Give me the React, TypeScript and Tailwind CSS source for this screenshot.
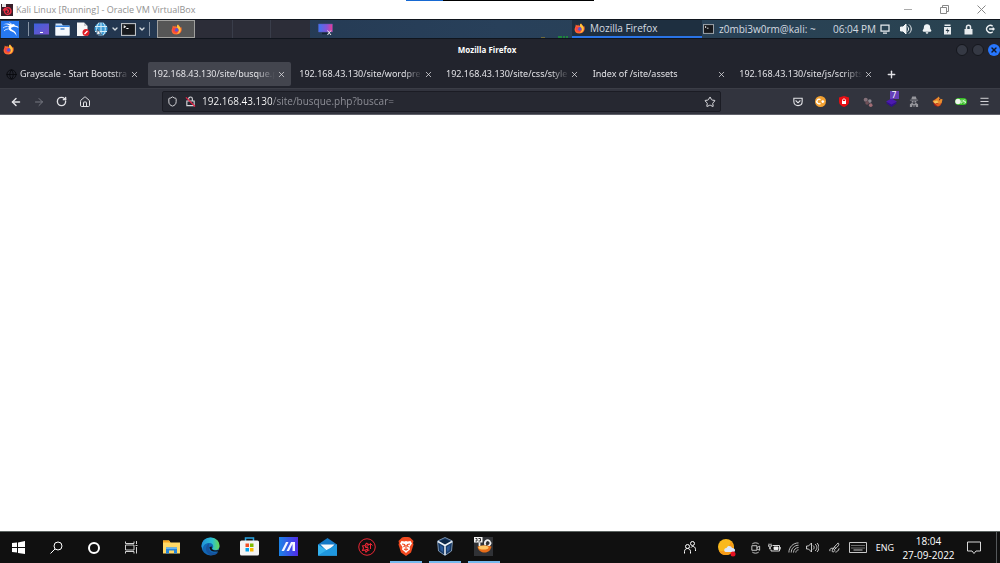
import type { ReactNode } from "react";
import { ArrowLeft, ArrowRight, Bell, ChevronDown, Globe, House, Menu, Plus, RotateCw, Search, Shield, Star, X } from "lucide-react";

const tabs = [
  { title: "Grayscale - Start Bootstra", icon: true },
  { title: "192.168.43.130/site/busque.p", active: true },
  { title: "192.168.43.130/site/wordpres" },
  { title: "192.168.43.130/site/css/style" },
  { title: "Index of /site/assets" },
  { title: "192.168.43.130/site/js/scripts" },
];

function FirefoxLogo({ className }: { className: string }) {
  return (
    <svg viewBox="0 0 24 24" className={className}>
      <path d="M3 8 4 3l3 3 2-3 2 4 5-6c2 3 3 5 5 7l1-2c3 6 1 17-10 17C2 23-1 15 3 8Z" fill="#ff6a2e" />
      <path d="M14 1c3 3 8 6 7 13-1 4-4 7-8 7 5-3 6-8 2-11-2-2-3-5-1-9Z" fill="#ffc73a" />
      <circle cx="12" cy="13" r="4.5" fill="#5c55cf" />
      <path d="M3 9c3-2 6-1 8 2l-4 2c1 4 6 5 9 2-1 5-9 7-12 1Z" fill="#f8443f" />
    </svg>
  );
}

function Terminal({ className }: { className: string }) {
  return (
    <svg viewBox="0 0 28 24" className={className}>
      <rect x="1" y="1" width="26" height="22" fill="#17191d" stroke="#bfc3c8" strokeWidth="2" />
      <path d="m5 5 3 2-3 2M10 10h4" fill="none" stroke="#fff" strokeWidth="2" />
    </svg>
  );
}

function VirtualMachineIcon() {
  return (
    <svg viewBox="0 0 24 24" className="size-3">
      <rect width="24" height="24" fill="#38202a" />
      <path d="M2 0h8v6H2z" fill="#e8e8e8" />
      <path d="M4 13c3-6 14-9 16 0 1 8-9 10-12 5s1-8 5-6 1 6-1 4" fill="none" stroke="#ee2d43" strokeWidth="2.8" />
    </svg>
  );
}

function PanelButton({ label, className, children }: { label: string; className: string; children: ReactNode }) {
  return (
    <button aria-label={label} className={`flex h-full shrink-0 items-center justify-center ${className}`}>
      {children}
    </button>
  );
}

function KaliPanel() {
  return (
    <div className="flex h-5 items-center border-y border-[#10151d] bg-linear-to-r from-[#22344d] via-[#28405a] to-[#2a4350] font-['Open_Sans',sans-serif] text-[10px] text-[#d5dbe0]">
      <PanelButton label="Applications" className="w-5">
        <svg viewBox="0 0 36 34" className="h-[17px] w-[18px]">
          <rect width="36" height="34" fill="#2678f0" />
          <path d="M3 7c7-3 13-3 18 0l5-1 2 3 6 2 1 3c-4-2-8-3-11-2-5 1-5 4-1 6 5 2 8 6 8 12-3-7-7-8-12-10-5-3-5-7-2-11-4-3-9-3-14-2Z" fill="#fff" />
          <path d="M4 14c4-3 8-4 12-3M6 20c3-3 5-4 9-4M17 3l6 5" fill="none" stroke="#fff" strokeWidth="1.5" />
        </svg>
      </PanelButton>
      <span className="ml-2 h-3.5 w-px bg-[#8693a4]" />
      <PanelButton label="Show desktop" className="ml-1 w-4">
        <svg viewBox="0 0 30 24" className="h-3 w-[15px]">
          <defs>
            <linearGradient id="desk" x2="1" y2="1"><stop stopColor="#3c62df" /><stop offset="1" stopColor="#7650c8" /></linearGradient>
          </defs>
          <path d="M0 1h30v22H0z" fill="url(#desk)" />
          <path d="M12 19h6" stroke="#fff" strokeWidth="2" />
        </svg>
      </PanelButton>
      <PanelButton label="Files" className="ml-[5px] w-4">
        <svg viewBox="0 0 30 26" className="h-[13px] w-[15px]">
          <path d="M1 1h12l3 4h13v20H1z" fill="#cfe3fa" />
          <path d="M1 5h28v5H1z" fill="#3584e4" />
          <path d="M1 8h28v17H1z" fill="#f4f8fd" />
          <path d="M11 12h8" stroke="#4e87c8" strokeWidth="3" />
        </svg>
      </PanelButton>
      <PanelButton label="Text editor" className="ml-[5px] w-4">
        <svg viewBox="0 0 28 30" className="h-[15px] w-3.5">
          <path d="M2 1h14l7 7v20H2z" fill="#f7f7f7" />
          <path d="m16 1 7 7h-7z" fill="#c4c7cc" />
          <circle cx="20" cy="21" r="7" fill="#e01b24" />
          <path d="m17 24 6-6" stroke="#fff" strokeWidth="2.4" />
        </svg>
      </PanelButton>
      <PanelButton label="Web browser" className="ml-[2px] w-4">
        <svg viewBox="0 0 28 28" className="size-3.5" fill="none">
          <circle cx="14" cy="14" r="13" fill="#3d9bd5" />
          <path d="M14 1v26M2 9h24M2 19h24M10 1c-6 8-6 18 0 26M18 1c6 8 6 18 0 26" stroke="#d5edf8" strokeWidth="2" />
          <path d="m5 26 2-11 8 10-4-1Z" fill="#fff" stroke="#243b57" strokeWidth="1.5" />
        </svg>
      </PanelButton>
      <PanelButton label="More browsers" className="w-[11px]"><ChevronDown size={8} strokeWidth={4} /></PanelButton>
      <PanelButton label="Terminal" className="w-4"><Terminal className="h-[13px] w-[15px]" /></PanelButton>
      <PanelButton label="More terminals" className="w-3"><ChevronDown size={8} strokeWidth={4} /></PanelButton>
      <span className="ml-[1px] h-3.5 w-px bg-[#8693a4]" />
      <button aria-label="Workspace 1" className="ml-[7px] flex h-full w-[38px] items-center justify-center border border-[#a0a09e] bg-[#565656]">
        <FirefoxLogo className="size-[11px]" />
      </button>
      <button aria-label="Workspace 2" className="h-full w-[38px] border-r border-[#393d4a] bg-[#2c2d38]" />
      <button aria-label="Workspace 3" className="h-full w-[38px] border-r border-[#393d4a] bg-[#2c2d38]" />
      <button aria-label="Workspace 4" className="h-full w-[39px] bg-[#2c2d38]" />
      <PanelButton label="Display" className="ml-[7px] w-4">
        <svg viewBox="0 0 30 26" className="h-[13px] w-[15px]">
          <defs>
            <linearGradient id="screen" x2="1"><stop stopColor="#3a77f2" /><stop offset=".6" stopColor="#8754d6" /><stop offset="1" stopColor="#ec3b91" /></linearGradient>
          </defs>
          <path d="M1 2h28v16H1z" fill="url(#screen)" stroke="#5b59b8" strokeWidth="1" />
          <path d="M8 21h10" stroke="#152334" strokeWidth="3" />
          <path d="m19 15 7 9m0-9-7 9" stroke="#e8e8e8" strokeWidth="2" />
        </svg>
      </PanelButton>
      <div className="ml-auto flex h-full items-end gap-[13px] pr-1">
        <span className="h-px w-1 bg-[#6f6b3e]" />
        <svg viewBox="0 0 10 2" className="h-0.5 w-2.5"><path d="M0 1h4m1 0h2m1 0h2" stroke="#1c9a37" strokeWidth="1.4" /></svg>
      </div>
      <button className="flex h-full w-[130px] items-center gap-[5px] border-b-2 border-[#2a74e6] bg-[#1e2f40] pl-[2px]">
        <FirefoxLogo className="size-[11px]" />
        Mozilla Firefox
      </button>
      <button className="flex h-full w-[131px] items-center gap-[5px] pl-px">
        <Terminal className="h-2.5 w-[11px]" />
        z0mbi3w0rm@kali: ~
      </button>
      <time className="w-[41px] text-right whitespace-nowrap">06:04 PM</time>
      <PanelButton label="Screen" className="w-[21px]">
        <svg viewBox="0 0 20 20" className="size-2.5" fill="none" stroke="#e8ecef" strokeWidth="2.5"><path d="M2 2h16v12H2zM6 18h8" /></svg>
      </PanelButton>
      <PanelButton label="Volume" className="w-[21px]">
        <svg viewBox="0 0 24 24" className="size-3" fill="#f0f3f5" stroke="#f0f3f5" strokeWidth="2">
          <path d="M1 8h5l6-6v20l-6-6H1z" />
          <path d="M15 7c3 3 3 7 0 10M18 3c6 5 6 13 0 18" fill="none" />
        </svg>
      </PanelButton>
      <PanelButton label="Notifications" className="w-[21px]"><Bell size={10} fill="#f0f3f5" color="#f0f3f5" strokeWidth={3} /></PanelButton>
      <PanelButton label="Power" className="w-[21px]">
        <svg viewBox="0 0 18 22" className="h-[11px] w-[9px]">
          <path d="M3 1h12v3H3zM2 6h14v15H2z" fill="#e8ecef" />
          <path d="m10 8-5 6h4l-1 5 5-7H9Z" fill="#253744" />
        </svg>
      </PanelButton>
      <PanelButton label="Lock" className="w-[21px]">
        <svg viewBox="0 0 18 22" className="h-[11px] w-[9px]"><path d="M1 10h16v11H1z" fill="#e8ecef" /><path d="M5 11V6c0-5 8-5 8 0v5" fill="none" stroke="#e8ecef" strokeWidth="3" /></svg>
      </PanelButton>
      <PanelButton label="Log out" className="w-[21px]">
        <svg viewBox="0 0 22 22" className="size-2.5" fill="none" stroke="#f0f3f5" strokeWidth="3"><path d="M17 5a8 8 0 1 0 0 12M9 11h11M17 8l3 3-3 3" /></svg>
      </PanelButton>
    </div>
  );
}

function Extensions() {
  return (
    <div className="mr-1 flex h-full w-[210px] items-center justify-between">
      <PanelButton label="Pocket" className="w-[23px]">
        <svg viewBox="0 0 24 24" className="size-2.5" fill="none" stroke="#e4e4e8" strokeWidth="2.6" strokeLinecap="round"><path d="M2 3h20v8c0 13-20 13-20 0zM7 9l5 5 5-5" /></svg>
      </PanelButton>
      <PanelButton label="Cookie editor" className="w-[23px]">
        <svg viewBox="0 0 24 24" className="size-[11px]"><circle cx="12" cy="12" r="12" fill="#f3a131" /><path d="M12 8a5 5 0 1 0 0 8M14 12h6m-3-3v6" fill="none" stroke="#fff" strokeWidth="3" /></svg>
      </PanelButton>
      <PanelButton label="Ad blocker" className="w-[23px]">
        <svg viewBox="0 0 20 22" className="h-[11px] w-2.5"><path d="m10 0 10 3v9c0 5-5 8-10 10C5 20 0 17 0 12V3z" fill="#e90d12" /><path d="M6 10h8v6H6z" fill="#fff" /><path d="M7 10V8c0-3 6-3 6 0v2" fill="none" stroke="#fff" strokeWidth="1.6" /></svg>
      </PanelButton>
      <PanelButton label="Web analyzer" className="w-[23px]">
        <svg viewBox="0 0 22 22" className="size-2.5" fill="#86727a"><circle cx="6" cy="6" r="4.5" /><circle cx="15" cy="9" r="4" fill="#8c8790" /><circle cx="9" cy="13" r="4" fill="#705159" /><circle cx="17" cy="18" r="4" fill="#a06c74" /></svg>
      </PanelButton>
      <button aria-label="Wappalyzer" className="relative flex h-full w-[23px] items-center justify-center">
        <svg viewBox="0 0 22 20" className="h-2.5 w-[11px]"><path d="m11 6 11 6-11 8L0 12z" fill="#32108c" /><path d="m11 3 11 6-11 6L0 9z" fill="#4c1aae" /></svg>
        <span className="absolute top-0.5 left-2.5 h-2 w-[9px] bg-[#6540b8] text-center text-[8px] leading-[8px] text-white">7</span>
      </button>
      <PanelButton label="Private identity" className="w-[23px]">
        <svg viewBox="0 0 22 24" className="h-[11px] w-2.5" fill="#96969c"><path d="M7 1h8l2 6H5zM2 8h18v2H2zM6 11h4v3H6zm6 0h4v3h-4zM2 24v-6l5-3 4 3 4-3 5 3v6h-5v-4h-3v4h-2v-4H7v4z" /></svg>
      </PanelButton>
      <PanelButton label="Proxy switcher" className="w-[23px]">
        <svg viewBox="0 0 24 24" className="size-[11px]"><circle cx="12" cy="14" r="9" fill="#a51c1c" /><path d="m1 11 7-4 7-6 2 5 6 1-2 9-5 2-5-3-6 1z" fill="#e98d2e" /><path d="m3 12 8-2 3 4-7 3z" fill="#f4c45c" /><path d="m7 18 8-2 5 3-7 4z" fill="#df6120" /><path d="m16 6 3 2-4 2z" fill="#5b1f22" /></svg>
      </PanelButton>
      <PanelButton label="JavaScript toggle" className="w-[23px]">
        <svg viewBox="0 0 24 14" className="h-[7px] w-3"><rect width="24" height="14" rx="7" fill="#36bd23" /><circle cx="6" cy="7" r="5.5" fill="#f1f5f0" /><path d="M14 3v7h-3m10-6h-4v3h4v3h-4" fill="none" stroke="#e8ffe5" strokeWidth="1.6" /></svg>
      </PanelButton>
      <PanelButton label="Menu" className="w-[23px]"><Menu size={11} strokeWidth={2} /></PanelButton>
    </div>
  );
}

function Firefox() {
  return (
    <section className="flex flex-1 flex-col text-[#e2e2e6]">
      <div className="flex h-[21px] items-center bg-[#22242d] pl-[3px]">
        <FirefoxLogo className="size-[11px]" />
        <h1 className="flex-1 pl-1 text-center font-['Open_Sans',sans-serif] text-[8px] font-bold text-white">Mozilla Firefox</h1>
        <div className="flex gap-1">
          <button aria-label="Minimize" className="size-3 rounded-full border border-[#15171d] bg-[#353944]" />
          <button aria-label="Maximize" className="size-3 rounded-full border border-[#15171d] bg-[#353944]" />
          <button aria-label="Close" className="flex size-3 items-center justify-center rounded-full bg-[#2777ff] text-[#10182b]"><X size={8} strokeWidth={4} /></button>
        </div>
      </div>
      <div className="flex items-center bg-[#22242d] py-[2px] text-[9px]">
        <div role="tablist" className="grid w-[88%] grid-cols-6 gap-[3px] pr-[2px] pl-px">
          {tabs.map((tab) => (
            <div key={tab.title} className={`flex h-6 min-w-0 items-center rounded-xs pr-1 pl-[5px] ${tab.active ? "bg-[#43454e]" : ""}`}>
              {tab.icon && <Globe size={11} className="mr-[3px] shrink-0 text-[#090a0e]" />}
              <button role="tab" aria-selected={!!tab.active} className="min-w-0 flex-1 mask-r-from-85% text-left whitespace-nowrap">
                {tab.title}
              </button>
              <button aria-label="Close tab" className="flex w-3 shrink-0 justify-center"><X size={9} strokeWidth={2} /></button>
            </div>
          ))}
        </div>
        <button aria-label="New tab" className="ml-1.5"><Plus size={11} strokeWidth={3} /></button>
      </div>
      <div className="flex h-[27px] items-center border-t border-b border-t-[#3b3d46] border-b-[#60616a] bg-[#32343e] pl-1">
        <PanelButton label="Back" className="w-[23px]"><ArrowLeft size={12} strokeWidth={3} /></PanelButton>
        <PanelButton label="Forward" className="w-[23px] text-[#777982]"><ArrowRight size={12} strokeWidth={2} /></PanelButton>
        <PanelButton label="Reload" className="w-[23px]">
          <RotateCw size={11} strokeWidth={3} />
        </PanelButton>
        <PanelButton label="Home" className="w-[23px]">
          <House size={12} strokeWidth={2} />
        </PanelButton>
        <div className="mr-[65px] ml-[66px] flex h-[21px] flex-1 items-center rounded-xs border border-[#1b1c24] bg-[#262831] px-1">
          <Shield size={11} strokeWidth={2} />
          <svg viewBox="0 0 24 24" className="ml-[7px] mr-1.5 size-[11px]" fill="none" stroke="#d9d9dd" strokeWidth="2.4">
            <path d="M4 11h16v10H4zM8 11V6c0-5 8-5 8 0v5" />
            <path d="m2 3 20 20" stroke="#e92045" strokeWidth="2.6" />
          </svg>
          <input
            aria-label="Address"
            defaultValue="192.168.43.130/site/busque.php?buscar="
            className="min-w-0 flex-1 bg-linear-to-r from-white from-[70px] to-[#92939b] to-[70px] bg-clip-text font-['Open_Sans',sans-serif] text-[10px] text-transparent outline-none"
          />
          <button aria-label="Bookmark"><Star size={12} strokeWidth={2} /></button>
        </div>
        <Extensions />
      </div>
      <main className="flex-1 bg-white" />
    </section>
  );
}

function AppButton({ label, running, children }: { label: string; running?: boolean; children: ReactNode }) {
  return (
    <button aria-label={label} className="flex h-full w-[39px] flex-col items-center">
      <span className="flex flex-1 items-center">{children}</span>
      <span className={`h-0.5 w-8 ${running ? "bg-[#76b9ed]" : ""}`} />
    </button>
  );
}

function Taskbar() {
  return (
    <footer className="flex h-8 items-center border-t border-[#5c6461] bg-[#101010] font-['Open_Sans',sans-serif] text-white">
      <PanelButton label="Start" className="w-[37px]">
        <svg viewBox="0 0 26 26" className="size-[13px]" fill="#fff"><path d="m0 4 10-1v9H0zm12-1 14-3v12H12zM0 14h10v9L0 22zm12 0h14v12l-14-2z" /></svg>
      </PanelButton>
      <PanelButton label="Search" className="w-[38px]">
        <svg viewBox="0 0 26 26" className="size-[13px]" fill="none" stroke="#fff" strokeWidth="2"><circle cx="16" cy="10" r="8" /><path d="M10 16 1 25" /></svg>
      </PanelButton>
      <PanelButton label="Cortana" className="w-[37px]"><span className="size-3 rounded-full border-2 border-white" /></PanelButton>
      <PanelButton label="Task view" className="w-[38px]">
        <svg viewBox="0 0 26 26" className="size-[13px]" fill="none" stroke="#e8e8e8" strokeWidth="1.8"><path d="M1 1v4h17V1M1 8h17v10H1zM1 25v-4h17v4M23 0v6M23 12v13M21 9h4" /></svg>
      </PanelButton>
      <div className="ml-[2px] flex h-full">
        <AppButton label="File Explorer">
          <svg viewBox="0 0 34 28" className="h-3.5 w-[17px]"><path d="M0 1h12l3 4h19v22H0z" fill="#ffd866" /><path d="M0 1h12l3 4H0z" fill="#f5a623" /><path d="M6 27V15h22v12h-6v-6H12v6z" fill="#2585dc" /><path d="M6 15h22v3H6z" fill="#61b4f5" /></svg>
        </AppButton>
        <AppButton label="Microsoft Edge">
          <svg viewBox="0 0 38 38" className="size-[19px]">
            <defs>
              <linearGradient id="edge" x2="1"><stop stopColor="#208fda" /><stop offset=".6" stopColor="#2cc1cf" /><stop offset="1" stopColor="#6ad94e" /></linearGradient>
            </defs>
            <circle cx="19" cy="19" r="18" fill="#1167b5" />
            <path d="M1 18C2-5 37-4 37 18c0 9-10 10-15 6 5-5 2-12-5-12C8 12 4 17 3 25Z" fill="url(#edge)" />
            <path d="M16 13c-8 5-9 17 2 23 6 2 14-1 17-6-11 5-20-1-19-8Z" fill="#16539d" />
            <path d="M17 20c0 8 9 11 18 8l1-2c-7 2-17 1-14-7Z" fill="#101010" />
          </svg>
        </AppButton>
        <AppButton label="Microsoft Store">
          <svg viewBox="0 0 38 38" className="size-[19px]"><path d="M11 9V2h16v7" fill="none" stroke="#29a3df" strokeWidth="3" /><rect y="7" width="38" height="30" rx="3" fill="#f3f3f3" /><path d="M11 13h7v7h-7z" fill="#f04e23" /><path d="M20 13h7v7h-7z" fill="#7eba00" /><path d="M11 22h7v7h-7z" fill="#00a2ed" /><path d="M20 22h7v7h-7z" fill="#fdb900" /></svg>
        </AppButton>
        <AppButton label="MyASUS">
          <svg viewBox="0 0 38 38" className="size-[19px]"><defs><linearGradient id="asus" x2="1"><stop stopColor="#1a83e6" /><stop offset="1" stopColor="#512ce8" /></linearGradient></defs><path d="M0 0h38v38H0z" fill="url(#asus)" /><path d="M5 28 14 10h5l-9 18zm10 0 9-18h8v18h-5V14l-7 14z" fill="#f1f4ff" /></svg>
        </AppButton>
        <AppButton label="Mail">
          <svg viewBox="0 0 38 36" className="h-[18px] w-[19px]"><path d="M0 13 19 0l19 13v22H0z" fill="#1478c5" /><path d="M5 13h28l-14 14z" fill="#f5f8fb" /><path d="m0 13 19 13 19-13v22H0z" fill="#36b4ef" /><path d="m0 35 19-12 19-10v22z" fill="#1f98df" /></svg>
        </AppButton>
        <AppButton label="Security Tool">
          <svg viewBox="0 0 36 36" className="size-[18px]" fill="none" stroke="#ec2735">
            <circle cx="18" cy="18" r="16.5" strokeWidth="2" />
            <path d="m17 10 3 3 3-1m0 12-4 1-3 3-2-4-5 1 2-5-2-4 5-1 3-5" strokeWidth="2.2" />
            <path d="M20 16h-5v3h5v4h-5M25 22V11m-4 4 4-4 4 4" strokeWidth="2" />
          </svg>
        </AppButton>
        <AppButton label="Brave" running>
          <svg viewBox="0 0 32 38" className="h-[19px] w-4"><path d="m8 1 4-1h8l4 1 3 3 4 4-1 4 1 3-5 16-10 7-10-7L1 15l1-3-1-4 4-4z" fill="#f14a20" /><path d="m7 8 6 1 3-1 3 1 6-1 3 5-5 7 1 5-5 4-3 3-3-3-5-4 1-5-5-7z" fill="#fff" /><path d="m8 14 5 1 1 2-3 3m13-6-5 1-1 2 3 3M16 17v7m-4 0 4 2 4-2" fill="none" stroke="#f14a20" strokeWidth="2.4" /></svg>
        </AppButton>
        <AppButton label="VirtualBox" running>
          <svg viewBox="0 0 32 38" className="h-[19px] w-4" strokeLinejoin="round">
            <path d="m16 1 15 7-2 20-13 9L3 28 1 8z" fill="#183a66" stroke="#9db6d0" strokeWidth="1.5" />
            <path d="m16 4 11 5-11 6L5 9z" fill="#0d2747" />
            <path d="m2 9 14 8 14-8M16 17v19" fill="none" stroke="#f1f5f9" strokeWidth="3" />
            <path d="m6 16 6 4v10l-5-4zm20 0-6 4v10l5-4z" fill="#2a5898" />
          </svg>
        </AppButton>
        <AppButton label="Kali Linux virtual machine" running>
          <svg viewBox="0 0 38 38" className="size-[19px]">
            <path d="M0 0h38v38H0z" fill="#303236" />
            <path d="M0 0h17v11H0z" fill="#f4f4f4" />
            <path d="M3 3h3v5H3m6-5h4v5H9" fill="none" stroke="#333" strokeWidth="2" />
            <path d="M11 11v8M23 17c-4-8 3-13 8-9 5 5 0 9-4 11" fill="none" stroke="#eee" strokeWidth="3.5" />
            <path d="M7 19c10-3 19-3 28 0-2 9-8 12-14 12S8 27 7 19Z" fill="#e66c18" />
            <ellipse cx="19" cy="21" rx="10" ry="4" fill="#ffc563" />
          </svg>
        </AppButton>
      </div>
      <div className="ml-auto flex h-full shrink-0 items-center">
        <PanelButton label="People" className="w-9">
          <svg viewBox="0 0 24 26" className="h-[13px] w-3" fill="none" stroke="#fff" strokeWidth="2"><circle cx="7" cy="11" r="4" /><path d="M1 25v-4c0-8 12-8 12 0v4" /><circle cx="17" cy="5" r="4" /><path d="M14 13c3-4 9-2 9 4v3" /></svg>
        </PanelButton>
        <PanelButton label="Weather" className="w-[38px]">
          <svg viewBox="0 0 36 36" className="size-[18px]"><circle cx="16" cy="16" r="16" fill="#f9b91d" /><path d="M2 23c9 3 19-1 24-19 11 15 2 28-10 28C8 32 3 28 2 23Z" fill="#f59a17" /><path d="M15 26c-5-2-2-9 2-8 2-6 10-5 11 0 7-1 8 8 3 8z" fill="#dce8fb" /><circle cx="30" cy="30" r="5" fill="#e81123" /></svg>
        </PanelButton>
        <PanelButton label="Meet now" className="w-[19px]">
          <svg viewBox="0 0 24 26" className="h-3 w-[11px]" fill="none" stroke="#e6e6e6" strokeWidth="1.8"><path d="M4 8h11v10H4zM15 12l6-3v9l-6-3M5 4c4-3 10-3 14 0M5 22c4 3 10 3 14 0" /></svg>
        </PanelButton>
        <PanelButton label="Battery" className="w-[19px]">
          <svg viewBox="0 0 26 20" className="h-2.5 w-[13px]" fill="none" stroke="#eee" strokeWidth="1.8"><path d="M9 5h14v11H6v-3" /><path d="M12 8h8v5h-8z" fill="#eee" /><path d="M25 8v5M2 1v3m4-3v3M1 4h6v3H5v5H3V7H1z" strokeWidth="1.4" /></svg>
        </PanelButton>
        <PanelButton label="Wireless network" className="w-[19px]">
          <svg viewBox="0 0 24 24" className="size-[11px]" fill="none" stroke="#ddd" strokeWidth="1.8"><path d="M2 23C2 11 11 2 23 2M7 23C7 14 14 7 23 7M12 23c0-6 5-11 11-11M17 23c0-3 3-6 6-6" /></svg>
        </PanelButton>
        <PanelButton label="Speakers" className="w-[19px]">
          <svg viewBox="0 0 26 22" className="h-[11px] w-[13px]" fill="none" stroke="#ddd" strokeWidth="1.8"><path d="M1 8h4l6-6v18l-6-6H1zM14 7c3 2 3 6 0 8M18 4c5 4 5 10 0 14M22 2c5 5 5 13 0 18" /></svg>
        </PanelButton>
        <PanelButton label="Windows Ink" className="w-6">
          <svg viewBox="0 0 24 24" className="size-[11px]" fill="none" stroke="#ddd" strokeWidth="2"><path d="M2 20c-2-7 7-8 10-4 3 5-6 8-5 3C8 14 15 7 20 2c3 3 1 7-7 13M14 22c3 0 7-3 8-8M11 10l4 4" /></svg>
        </PanelButton>
        <PanelButton label="Touch keyboard" className="w-6">
          <svg viewBox="0 0 36 22" className="h-[11px] w-[18px]" fill="none" stroke="#ddd" strokeWidth="1.8"><path d="M1 1h34v20H1zM9 16h18" /><path d="M5 7h26M5 12h26" strokeDasharray="2 2" /></svg>
        </PanelButton>
        <button className="h-full w-[30px] text-[9px]">ENG</button>
        <button className="h-full w-[57px] text-center text-[10px] leading-[14px]">
          <time className="block">18:04</time>
          <time className="block">27-09-2022</time>
        </button>
        <PanelButton label="Action center" className="w-[34px]">
          <svg viewBox="0 0 28 26" className="h-[13px] w-3.5" fill="none" stroke="#eee" strokeWidth="1.8"><path d="M1 2h26v18h-9l-4 5-4-5H1z" /></svg>
        </PanelButton>
        <button aria-label="Peek at desktop" className="ml-[5px] h-full w-1 border-l border-[#55585a]" />
      </div>
    </footer>
  );
}

export default function App() {
  return (
    <div className="flex min-h-screen flex-col bg-white font-['Noto_Sans',sans-serif]">
      <header className="relative flex h-[19px] items-center bg-white pl-px font-['Open_Sans',sans-serif] text-[#929292]">
        <VirtualMachineIcon />
        <span className="ml-[3px] text-[9px]">Kali Linux [Running] - Oracle VM VirtualBox</span>
        {/* Collapsed full-screen toolbar */}
        <div className="absolute top-0 left-1/2 flex h-px w-[188px] -translate-x-1/2 bg-black">
          <span className="w-[37px] bg-[#1769d2]" />
        </div>
        <div className="ml-auto flex h-full">
          <PanelButton label="Minimize window" className="w-9"><span className="h-px w-2 bg-[#aaa]" /></PanelButton>
          <PanelButton label="Restore window" className="w-9">
            <svg viewBox="0 0 9 9" className="size-[9px]" fill="none" stroke="#888"><path d="M.5 2.5h6v6h-6zM2.5 2V.5h6v6H7" /></svg>
          </PanelButton>
          <PanelButton label="Close window" className="w-[38px]">
            <svg viewBox="0 0 9 9" className="size-[9px]" stroke="#888"><path d="m.5.5 8 8m0-8-8 8" /></svg>
          </PanelButton>
        </div>
      </header>
      <KaliPanel />
      <Firefox />
      <Taskbar />
    </div>
  );
}
